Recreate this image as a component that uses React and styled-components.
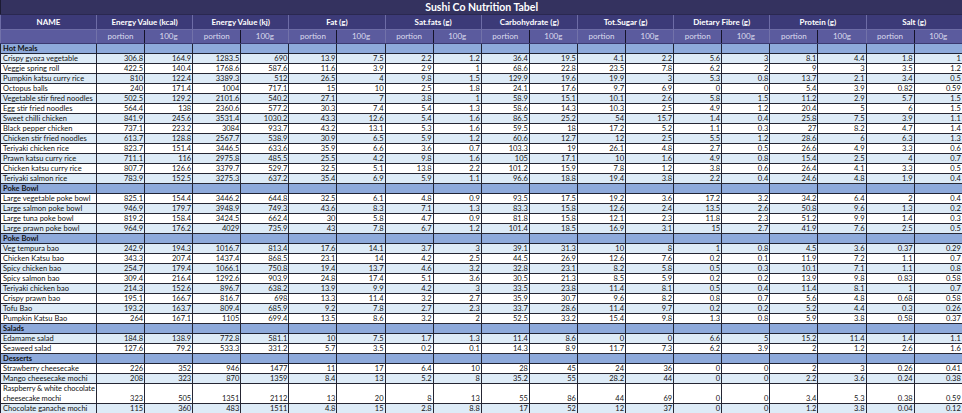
import React from 'react';
import styled, { createGlobalStyle } from 'styled-components';

const GlobalStyle = createGlobalStyle`
  html, body {
    margin: 0;
    padding: 0;
    background: #ffffff;
  }
  body {
    font-family: Lato, "Liberation Sans", sans-serif;
  }
`;

const GROUPS = [
  'Energy Value (kcal)',
  'Energy Value (kj)',
  'Fat (g)',
  'Sat.fats (g)',
  'Carbohydrate (g)',
  'Tot.Sugar (g)',
  'Dietary Fibre (g)',
  'Protein (g)',
  'Salt (g)',
];

// s = striped (light blue) row
const SECTIONS = [
  {
    title: 'Hot Meals',
    rows: [
      { name: 'Crispy gyoza vegetable', s: 1, v: '306.8 164.9 1283.5 690 13.9 7.5 2.2 1.2 36.4 19.5 4.1 2.2 5.6 3 8.1 4.4 1.8 1' },
      { name: 'Veggie spring roll', s: 0, v: '422.5 140.4 1768.6 587.6 11.6 3.9 2.9 1 68.6 22.8 23.5 7.8 6.2 2 9 3 3.5 1.2' },
      { name: 'Pumpkin katsu curry rice', s: 1, v: '810 122.4 3389.3 512 26.5 4 9.8 1.5 129.9 19.6 19.9 3 5.3 0.8 13.7 2.1 3.4 0.5' },
      { name: 'Octopus balls', s: 0, v: '240 171.4 1004 717.1 15 10 2.5 1.8 24.1 17.6 9.7 6.9 0 0 5.4 3.9 0.82 0.59' },
      { name: 'Vegetable stir fired noodles', s: 1, v: '502.5 129.2 2101.6 540.2 27.1 7 3.8 1 58.9 15.1 10.1 2.6 5.8 1.5 11.2 2.9 5.7 1.5' },
      { name: 'Egg stir fried noodles', s: 0, v: '564.4 138 2360.6 577.2 30.3 7.4 5.4 1.3 58.6 14.3 10.3 2.5 4.9 1.2 20.4 5 6 1.5' },
      { name: 'Sweet chilli chicken', s: 1, v: '841.9 245.6 3531.4 1030.2 43.3 12.6 5.4 1.6 86.5 25.2 54 15.7 1.4 0.4 25.8 7.5 3.9 1.1' },
      { name: 'Black pepper chicken', s: 0, v: '737.1 223.2 3084 933.7 43.2 13.1 5.3 1.6 59.5 18 17.2 5.2 1.1 0.3 27 8.2 4.7 1.4' },
      { name: 'Chicken stir fried noodles', s: 1, v: '613.7 128.8 2567.7 538.9 30.9 6.5 5.9 1.2 60.6 12.7 12 2.5 5.5 1.2 28.6 6 6.3 1.3' },
      { name: 'Teriyaki chicken rice', s: 0, v: '823.7 151.4 3446.5 633.6 35.9 6.6 3.6 0.7 103.3 19 26.1 4.8 2.7 0.5 26.6 4.9 3.3 0.6' },
      { name: 'Prawn katsu curry rice', s: 1, v: '711.1 116 2975.8 485.5 25.5 4.2 9.8 1.6 105 17.1 10 1.6 4.9 0.8 15.4 2.5 4 0.7' },
      { name: 'Chicken katsu curry rice', s: 0, v: '807.7 126.6 3379.7 529.7 32.5 5.1 13.8 2.2 101.2 15.9 7.8 1.2 3.8 0.6 26.4 4.1 3.3 0.5' },
      { name: 'Teriyaki salmon rice', s: 1, v: '783.9 152.5 3275.3 637.2 35.4 6.9 5.9 1.1 96.6 18.8 19.4 3.8 2.2 0.4 24.6 4.8 1.9 0.4' },
    ],
  },
  {
    title: 'Poke Bowl',
    rows: [
      { name: 'Large vegetable poke bowl', s: 0, v: '825.1 154.4 3446.2 644.8 32.5 6.1 4.8 0.9 93.5 17.5 19.2 3.6 17.2 3.2 34.2 6.4 2 0.4' },
      { name: 'Large salmon poke bowl', s: 1, v: '946.9 179.7 3948.9 749.3 43.6 8.3 7.1 1.3 83.3 15.8 12.6 2.4 13.5 2.6 50.8 9.6 1.3 0.2' },
      { name: 'Large tuna poke bowl', s: 0, v: '819.2 158.4 3424.5 662.4 30 5.8 4.7 0.9 81.8 15.8 12.1 2.3 11.8 2.3 51.2 9.9 1.4 0.3' },
      { name: 'Large prawn poke bowl', s: 1, v: '964.9 176.2 4029 735.9 43 7.8 6.7 1.2 101.4 18.5 16.9 3.1 15 2.7 41.9 7.6 2.5 0.5' },
    ],
  },
  {
    title: 'Poke Bowl',
    rows: [
      { name: 'Veg tempura bao', s: 1, v: '242.9 194.3 1016.7 813.4 17.6 14.1 3.7 3 39.1 31.3 10 8 1 0.8 4.5 3.6 0.37 0.29' },
      { name: 'Chicken Katsu bao', s: 0, v: '343.3 207.4 1437.4 868.5 23.1 14 4.2 2.5 44.5 26.9 12.6 7.6 0.2 0.1 11.9 7.2 1.1 0.7' },
      { name: 'Spicy chicken bao', s: 1, v: '254.7 179.4 1066.1 750.8 19.4 13.7 4.6 3.2 32.8 23.1 8.2 5.8 0.5 0.3 10.1 7.1 1.1 0.8' },
      { name: 'Spicy salmon bao', s: 0, v: '309.4 216.4 1292.6 903.9 24.8 17.4 5.1 3.6 30.5 21.3 8.5 5.9 0.2 0.2 13.9 9.8 0.83 0.58' },
      { name: 'Teriyaki chicken bao', s: 1, v: '214.3 152.6 896.7 638.2 13.9 9.9 4.2 3 33.5 23.8 11.4 8.1 0.5 0.4 11.4 8.1 1 0.7' },
      { name: 'Crispy prawn bao', s: 0, v: '195.1 166.7 816.7 698 13.3 11.4 3.2 2.7 35.9 30.7 9.6 8.2 0.8 0.7 5.6 4.8 0.68 0.58' },
      { name: 'Tofu Bao', s: 1, v: '193.2 163.7 809.4 685.9 9.2 7.8 2.7 2.3 33.7 28.6 11.4 9.7 0.2 0.2 5.2 4.4 0.3 0.26' },
      { name: 'Pumpkin Katsu Bao', s: 0, v: '264 167.1 1105 699.4 13.5 8.6 3.2 2 52.5 33.2 15.4 9.8 1.3 0.8 5.9 3.8 0.58 0.37' },
    ],
  },
  {
    title: 'Salads',
    rows: [
      { name: 'Edamame salad', s: 1, v: '184.8 138.9 772.8 581.1 10 7.5 1.7 1.3 11.4 8.6 0 0 6.6 5 15.2 11.4 1.4 1.1' },
      { name: 'Seaweed salad', s: 0, v: '127.6 79.2 533.3 331.2 5.7 3.5 0.2 0.1 14.3 8.9 11.7 7.3 6.2 3.9 2 1.2 2.6 1.6' },
    ],
  },
  {
    title: 'Desserts',
    rows: [
      { name: 'Strawberry cheesecake', s: 0, v: '226 352 946 1477 11 17 6.4 10 28 45 24 36 0 0 2 3 0.26 0.41' },
      { name: 'Mango cheesecake mochi', s: 1, v: '208 323 870 1359 8.4 13 5.2 8 35.2 55 28.2 44 0 0 2.2 3.6 0.24 0.38' },
      { name: 'Raspberry & white chocolate\ncheesecake mochi', s: 0, tall: true, v: '323 505 1351 2112 13 20 8 13 55 86 44 69 0 0 3.4 5.3 0.38 0.59' },
      { name: 'Chocolate ganache mochi', s: 1, v: '115 360 483 1511 4.8 15 2.8 8.8 17 52 12 37 0 0 1.2 3.8 0.04 0.12' },
    ],
  },
];

const App = () => {
  return (
    <>
      <GlobalStyle />
      <Table>
        <colgroup>
          <NameCol />
          {Array.from({ length: 18 }).map((_, i) => <NumCol key={i} />)}
        </colgroup>
        <thead>
          <tr>
            <TitleCell colSpan={19}>Sushi Co Nutrition Tabel</TitleCell>
          </tr>
          <tr>
            <GroupCell>NAME</GroupCell>
            {GROUPS.map((g) => (
              <GroupCell key={g} colSpan={2}>{g}</GroupCell>
            ))}
          </tr>
          <tr>
            <SubCell />
            {GROUPS.map((g) => (
              <React.Fragment key={g}>
                <SubCell $dark>portion</SubCell>
                <SubCell>100g</SubCell>
              </React.Fragment>
            ))}
          </tr>
        </thead>
        <tbody>
          {SECTIONS.map((sec, si) => (
            <React.Fragment key={si}>
              <tr>
                <SectionCell>{sec.title}</SectionCell>
                {Array.from({ length: 18 }).map((_, i) => <SectionCell key={i} />)}
              </tr>
              {sec.rows.map((r) => (
                <Row key={r.name} $stripe={r.s}>
                  <NameCell $tall={r.tall}>{r.name}</NameCell>
                  {r.v.split(' ').map((n, i) => (
                    <NumCell key={i}>{n}</NumCell>
                  ))}
                </Row>
              ))}
            </React.Fragment>
          ))}
        </tbody>
      </Table>
    </>
  );
};

//Style
const Table = styled.table`
  border-collapse: collapse;
  table-layout: fixed;
  width: 962px;
  font-family: Lato, "Liberation Sans", sans-serif;
  border-left: 1px solid #1c1b33;
`;

const NameCol = styled.col`
  width: 96px;
`;

const NumCol = styled.col`
  width: 48.1px;
`;

const TitleCell = styled.th`
  height: 14px;
  padding: 0;
  background: #34325f;
  color: #ffffff;
  font-size: 10.5px;
  font-weight: 700;
  line-height: 13px;
  text-align: center;
  border-bottom: 1px solid #2a2850;
`;

const GroupCell = styled.th`
  height: 14px;
  padding: 0;
  background: #3c3a78;
  color: #ffffff;
  font-size: 8px;
  font-weight: 700;
  line-height: 13px;
  text-align: center;
  white-space: nowrap;
  overflow: hidden;
  border: 1px solid #6d6ca6;
  border-top: 0;
`;

const SubCell = styled.th`
  height: 13px;
  padding: 0;
  background: #5b5b9e;
  color: #dcdcee;
  font-size: 8px;
  font-weight: 400;
  line-height: 13px;
  text-align: center;
  border-bottom: 1px solid #3a3970;
  border-left: 1px solid #7272aa;
  border-right: 1px solid ${(p) => (p.$dark ? '#15142a' : '#7272aa')};
`;

const SectionCell = styled.td`
  height: 9px;
  padding: 0 0 0 2px;
  background: #8eaadb;
  color: #111111;
  font-size: 7.5px;
  font-weight: 700;
  line-height: 9px;
  white-space: nowrap;
  overflow: hidden;
  border: 1px solid #1f2233;
`;

const Row = styled.tr`
  background: ${(p) => (p.$stripe ? '#ddebf7' : '#ffffff')};
`;

const NameCell = styled.td`
  height: ${(p) => (p.$tall ? '19px' : '9px')};
  padding: 0 0 0 2px;
  color: #141414;
  font-size: 7.5px;
  line-height: ${(p) => (p.$tall ? '9.5px' : '9px')};
  white-space: pre;
  letter-spacing: ${(p) => (p.$tall ? '-0.1px' : '0')};
  overflow: hidden;
  vertical-align: bottom;
  border: 1px solid #262633;
  border-left: 0;
`;

const NumCell = styled.td`
  padding: 0 1px 0 0;
  color: #141414;
  font-size: 7.5px;
  line-height: 9px;
  text-align: right;
  white-space: nowrap;
  overflow: hidden;
  vertical-align: bottom;
  border: 1px solid #262633;
`;

export default App;
